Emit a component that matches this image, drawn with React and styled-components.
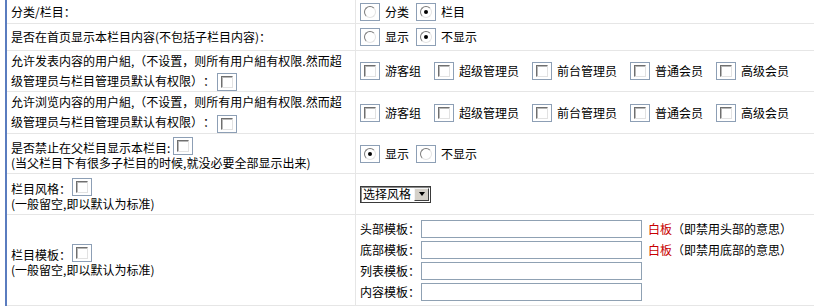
import React from 'react';
import styled, { createGlobalStyle } from 'styled-components';

const Global = createGlobalStyle`
  html, body { margin: 0; padding: 0; background: #fff; overflow: hidden; }
  body {
    font-family: "Noto Sans CJK SC", "Noto Sans", sans-serif;
    font-size: 12px;
    color: #000;
    text-spacing-trim: space-all;
  }
`;

const Table = styled.div`
  margin-left: 5px;
  width: 840px;
  border-left: 2px solid #5a7cbf;
`;

const Row = styled.div`
  display: flex;
  box-sizing: border-box;
  height: ${p => p.$h}px;
  border-bottom: 1px solid #e6e6e6;
`;

const LabelCell = styled.div`
  flex: 0 0 349px;
  box-sizing: border-box;
  padding: 0 6px 0 4px;
  border-right: 1px solid #e6e6e6;
  display: flex;
  flex-direction: column;
  justify-content: center;
`;

const ValueCell = styled.div`
  flex: 1;
  display: flex;
  flex-direction: ${p => (p.$stack ? 'column' : 'row')};
  align-items: ${p => (p.$stack ? 'flex-start' : 'center')};
  justify-content: ${p => (p.$stack ? 'center' : 'flex-start')};
  padding-left: 4px;
`;

const LabelText = styled.div`
  line-height: 20px;
`;

const LabelLine = styled.div`
  display: flex;
  align-items: flex-end;
  height: 18px;
  line-height: 14px;
`;

const SubText = styled.div`
  line-height: 15px;
`;

const Frame = styled.span`
  display: inline-flex;
  align-items: center;
  justify-content: center;
  box-sizing: border-box;
  width: 20px;
  height: 18px;
  border: 1px solid #8d9fb5;
  background: #fff;
  vertical-align: middle;
  flex-shrink: 0;
  margin-left: ${p => p.$ml || 0}px;
`;

const BoxMark = styled.span`
  width: 12px;
  height: 12px;
  box-sizing: border-box;
  border: 1px solid;
  border-color: #6f6f6f #e2e2e2 #e2e2e2 #6f6f6f;
  box-shadow: inset 1px 1px 0 #b8b8b8;
  background: #fff;
`;

const RadioMark = styled.span`
  width: 12px;
  height: 12px;
  box-sizing: border-box;
  border-radius: 50%;
  border: 1px solid;
  border-color: #7a7a7a #e4e4e4 #e4e4e4 #7a7a7a;
  background: #fff;
  display: flex;
  align-items: center;
  justify-content: center;
  &::after {
    content: '';
    display: ${p => (p.$on ? 'block' : 'none')};
    width: 4px;
    height: 4px;
    border-radius: 50%;
    background: #000;
  }
`;

const Option = styled.label`
  display: inline-flex;
  align-items: center;
  margin-right: ${p => p.$gap}px;
`;

const OptText = styled.span`
  margin-left: 5px;
  line-height: 18px;
  white-space: nowrap;
`;

const Select = styled.span`
  display: inline-flex;
  align-items: center;
  justify-content: space-between;
  box-sizing: border-box;
  width: 71px;
  height: 17px;
  border: 1px solid #3a3a3a;
  box-shadow: inset 1px 1px 0 #8a8a8a;
  background: #fff;
  padding: 0 1px 0 2px;
`;

const SelectText = styled.span`
  line-height: 14px;
  white-space: nowrap;
`;

const SelectArrow = styled.span`
  width: 15px;
  height: 13px;
  box-sizing: border-box;
  background: #d4d0c8;
  border: 1px solid;
  border-color: #f4f4f4 #404040 #404040 #f4f4f4;
  display: flex;
  align-items: center;
  justify-content: center;
  &::after {
    content: '';
    border-left: 3.5px solid transparent;
    border-right: 3.5px solid transparent;
    border-top: 4px solid #000;
  }
`;

const TplLine = styled.div`
  display: flex;
  align-items: center;
  height: 21px;
  white-space: nowrap;
`;

const TplInput = styled.input`
  width: 221px;
  height: 18px;
  box-sizing: border-box;
  border: 1px solid #8fa1b3;
  margin: 0 0 0 1px;
  padding: 0 2px;
  font: inherit;
  background: #fff;
  outline: none;
`;

const Red = styled.span`
  color: #c80000;
  margin-left: 6px;
`;

const Check = () => (
  <Frame><BoxMark /></Frame>
);

const InlineCheck = ({ ml = 2 }) => (
  <Frame $ml={ml}><BoxMark /></Frame>
);

const Radio = ({ on, label, gap = 7 }) => (
  <Option $gap={gap}>
    <Frame><RadioMark $on={on} /></Frame>
    <OptText>{label}</OptText>
  </Option>
);

const groups = ['游客组', '超级管理员', '前台管理员', '普通会员', '高级会员'];

const GroupChecks = () => (
  <>
    {groups.map(g => (
      <Option key={g} $gap={13}>
        <Check />
        <OptText>{g}</OptText>
      </Option>
    ))}
  </>
);

const templates = [
  { label: '头部模板：', hint: '（即禁用头部的意思）' },
  { label: '底部模板：', hint: '（即禁用底部的意思）' },
  { label: '列表模板：' },
  { label: '内容模板：' },
];

export default function App() {
  return (
    <>
      <Global />
      <Table>
        <Row $h={24}>
          <LabelCell><LabelText>分类/栏目：</LabelText></LabelCell>
          <ValueCell>
            <Radio label="分类" />
            <Radio label="栏目" on />
          </ValueCell>
        </Row>
        <Row $h={27}>
          <LabelCell><LabelText>是否在首页显示本栏目内容(不包括子栏目内容)：</LabelText></LabelCell>
          <ValueCell>
            <Radio label="显示" />
            <Radio label="不显示" on />
          </ValueCell>
        </Row>
        <Row $h={41}>
          <LabelCell>
            <LabelText>
              允许发表内容的用户組,（不设置，则所有用户組有权限.然而超级管理员与栏目管理员默认有权限）：<InlineCheck />
            </LabelText>
          </LabelCell>
          <ValueCell><GroupChecks /></ValueCell>
        </Row>
        <Row $h={42}>
          <LabelCell>
            <LabelText>
              允许浏览内容的用户組,（不设置，则所有用户組有权限.然而超级管理员与栏目管理员默认有权限）：<InlineCheck />
            </LabelText>
          </LabelCell>
          <ValueCell><GroupChecks /></ValueCell>
        </Row>
        <Row $h={40}>
          <LabelCell>
            <LabelLine>是否禁止在父栏目显示本栏目:<InlineCheck ml={3} /></LabelLine>
            <SubText>(当父栏目下有很多子栏目的时候,就没必要全部显示出来)</SubText>
          </LabelCell>
          <ValueCell>
            <Radio label="显示" on />
            <Radio label="不显示" />
          </ValueCell>
        </Row>
        <Row $h={41}>
          <LabelCell>
            <LabelLine>栏目风格：<InlineCheck ml={1} /></LabelLine>
            <SubText>(一般留空,即以默认为标准)</SubText>
          </LabelCell>
          <ValueCell>
            <Select>
              <SelectText>选择风格</SelectText>
              <SelectArrow />
            </Select>
          </ValueCell>
        </Row>
        <Row $h={91}>
          <LabelCell>
            <LabelLine>栏目模板：<InlineCheck ml={1} /></LabelLine>
            <SubText>(一般留空,即以默认为标准)</SubText>
          </LabelCell>
          <ValueCell $stack>
            {templates.map(t => (
              <TplLine key={t.label}>
                <span>{t.label}</span>
                <TplInput type="text" defaultValue="" />
                {t.hint && (
                  <>
                    <Red>白板</Red>
                    <span>{t.hint}</span>
                  </>
                )}
              </TplLine>
            ))}
          </ValueCell>
        </Row>
      </Table>
    </>
  );
}
